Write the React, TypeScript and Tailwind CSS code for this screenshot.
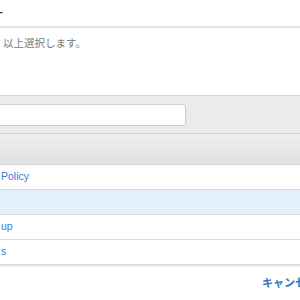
export default function App() {
  const rows = [
    { label: "Policy", selected: false },
    { label: "", selected: true },
    { label: "up", selected: false },
    { label: "s", selected: false },
  ];
  return (
    <div
      className="w-[300px] h-[300px] overflow-hidden bg-white flex flex-col"
      style={{ fontFamily: '"Liberation Sans", "Noto Sans CJK JP", sans-serif' }}
    >
      <div className="h-[26px] flex items-center overflow-hidden">
        <span className="-ml-[10px] text-[14px] text-[#333] leading-none">ー</span>
      </div>
      <div className="h-[69px] border-t-2 border-[#e6e6e6] px-[3px] pt-[7px]">
        <p className="text-[10.5px] leading-[16px] text-[#777]">以上選択します。</p>
      </div>
      <div className="h-[38px] border-t border-[#d8d8d8] bg-[#ebebeb] flex items-center">
        <div className="-ml-[6px] w-[192px] h-[22px] bg-white border border-[#cfcfcf] rounded-[3px]" />
      </div>
      <div className="h-[32px] border-t border-[#d4d4d4] border-b bg-gradient-to-b from-[#efefef] to-[#e1e1e1]" />
      {rows.map((r, i) => (
        <div
          key={i}
          className={`h-[25px] border-b border-[#dcdcdc] flex items-center text-[10.5px] text-[#3a7bd5] ${
            r.selected ? "bg-[#e3f0fd]" : "bg-white"
          }`}
        >
          <span className="pl-[1px]">{r.label}</span>
        </div>
      ))}
      <div className="h-[2px] bg-[#ececec]" />
      <div className="flex pl-[262px] pt-[8px]">
        <span className="text-[11px] font-bold text-[#2f74c0] whitespace-nowrap">キャンセル</span>
      </div>
    </div>
  );
}
